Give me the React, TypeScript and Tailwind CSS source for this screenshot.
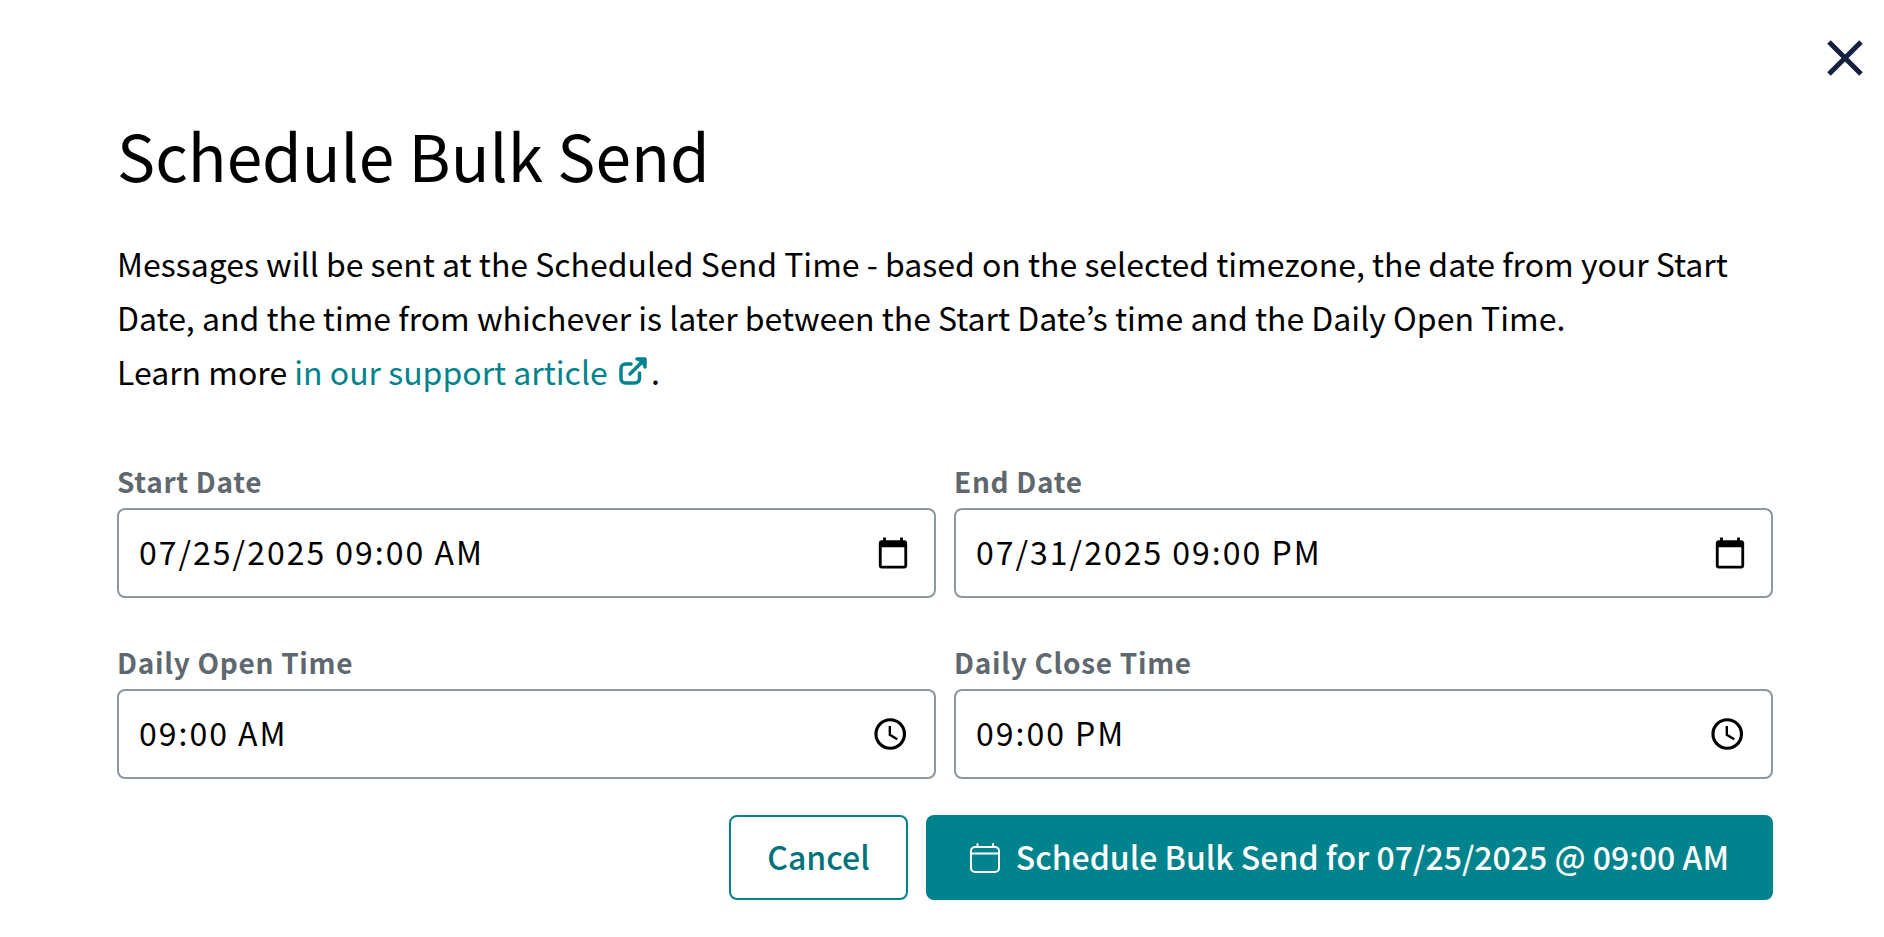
import { useState } from 'react';

interface FieldProps {
  id: string;
  label: string;
  kind: 'date' | 'time';
  value: string;
  onChange: (value: string) => void;
}

function Field({ id, label, kind, value, onChange }: FieldProps) {
  return (
    <div className="flex flex-col">
      <label htmlFor={id} className="text-[28px] leading-[36px] font-semibold tracking-wide text-[#5f686e] mb-[9px]">
        {label}
      </label>
      <div className="flex h-[90px] items-center rounded-lg border-2 border-[#8f979d] bg-white pr-6">
        <input
          id={id}
          type="text"
          value={value}
          onChange={(e) => onChange(e.target.value)}
          className="h-full min-w-0 flex-1 rounded-lg bg-transparent pb-1 pl-5 text-[32px] tracking-[2px] text-black outline-none"
        />
        <button type="button" aria-label={`Pick ${label}`} className="shrink-0">
          {kind === 'date' ? <DatePickerIcon /> : <TimePickerIcon />}
        </button>
      </div>
    </div>
  );
}

function DatePickerIcon() {
  return (
    <svg viewBox="0 0 24 24" fill="currentColor" className="size-[34px]" aria-hidden="true">
      <path d="M20 3h-1V1h-2v2H7V1H5v2H4c-1.100 0-2 .9-2 2v16c0 1.100.9 2 2 2h16c1.100 0 2-.9 2-2V5c0-1.100-.9-2-2-2zm0 18H4V8h16v13z" />
    </svg>
  );
}

function TimePickerIcon() {
  return (
    <svg viewBox="0 0 24 24" fill="none" stroke="currentColor" className="size-[38px]" aria-hidden="true">
      <circle cx="11.500" cy="12" r="9" strokeWidth="2" />
      <path d="M11.250 7v5.500l4.700 2.800" strokeWidth="1.500" />
    </svg>
  );
}

function ExternalLinkIcon() {
  return (
    <svg viewBox="0 0 28 28" fill="none" stroke="currentColor" strokeWidth="3.500" strokeLinecap="round" strokeLinejoin="round" className="mx-1 inline-block size-7 align-baseline" aria-hidden="true">
      <path d="M12 7H6.500a4.500 4.500 0 0 0-4.500 4.500V21.500a4.500 4.500 0 0 0 4.500 4.500H16a4.500 4.500 0 0 0 4.500-4.500V16" />
      <path d="M18 2h8v8M25 3 11 17" />
      <path d="M18 2h8v8z" fill="currentColor" strokeWidth="1" />
    </svg>
  );
}

function CalendarIcon() {
  return (
    <svg viewBox="0 0 30 30" fill="none" stroke="currentColor" strokeWidth="2" strokeLinecap="round" className="h-[30px] w-[30px]" aria-hidden="true">
      <rect x="1" y="4" width="28" height="25" rx="4" />
      <path d="M1 10.500h28M7.500 1v3M23 1v3" />
    </svg>
  );
}

export default function ScheduleBulkSendModal() {
  const [startDate, setStartDate] = useState('07/25/2025 09:00 AM');
  const [endDate, setEndDate] = useState('07/31/2025 09:00 PM');
  const [openTime, setOpenTime] = useState('09:00 AM');
  const [closeTime, setCloseTime] = useState('09:00 PM');

  return (
    <div role="dialog" aria-labelledby="modal-title" className="relative min-h-screen bg-white pt-[108px] pr-[111px] pb-9 pl-[117px] font-['Noto_Sans_CJK_KR','Noto_Sans',sans-serif] text-black">
      <button type="button" aria-label="Close" className="absolute top-[34px] right-[15px] flex size-12 items-center justify-center text-[#14213f]">
        <svg viewBox="0 0 36 36" fill="none" stroke="currentColor" strokeWidth="5" className="size-9" aria-hidden="true">
          <path d="M2 2l32 32M34 2L2 34" />
        </svg>
      </button>

      <h1 id="modal-title" className="text-[64px] leading-[92px]">Schedule Bulk Send</h1>

      <p className="mt-9 text-[32px] leading-[54px]">
        Messages will be sent at the Scheduled Send Time - based on the selected timezone, the date from your Start
        Date, and the time from whichever is later between the Start Date’s time and the Daily Open Time.
        <br />
        Learn more{' '}
        <a href="#support" className="text-[#00838c]">
          in our support article <ExternalLinkIcon />
        </a>
        .
      </p>

      <form onSubmit={(e) => e.preventDefault()}>
        <div className="mt-[65px] grid grid-cols-2 gap-x-[18px] gap-y-[46px]">
          <Field id="start-date" label="Start Date" kind="date" value={startDate} onChange={setStartDate} />
          <Field id="end-date" label="End Date" kind="date" value={endDate} onChange={setEndDate} />
          <Field id="open-time" label="Daily Open Time" kind="time" value={openTime} onChange={setOpenTime} />
          <Field id="close-time" label="Daily Close Time" kind="time" value={closeTime} onChange={setCloseTime} />
        </div>

        {/* Actions */}
        <div className="mt-9 flex justify-end gap-[18px] text-[32px] font-medium">
          <button type="button" className="h-[85px] rounded-lg border-2 border-[#00838c] px-9 pb-1 text-[#00737a]">
            Cancel
          </button>
          <button type="submit" className="flex h-[85px] items-center gap-4 rounded-lg bg-[#00838c] px-11 text-white">
            <CalendarIcon />
            <span className="pb-1">Schedule Bulk Send for {startDate.replace(' ', ' @ ')}</span>
          </button>
        </div>
      </form>
    </div>
  );
}
